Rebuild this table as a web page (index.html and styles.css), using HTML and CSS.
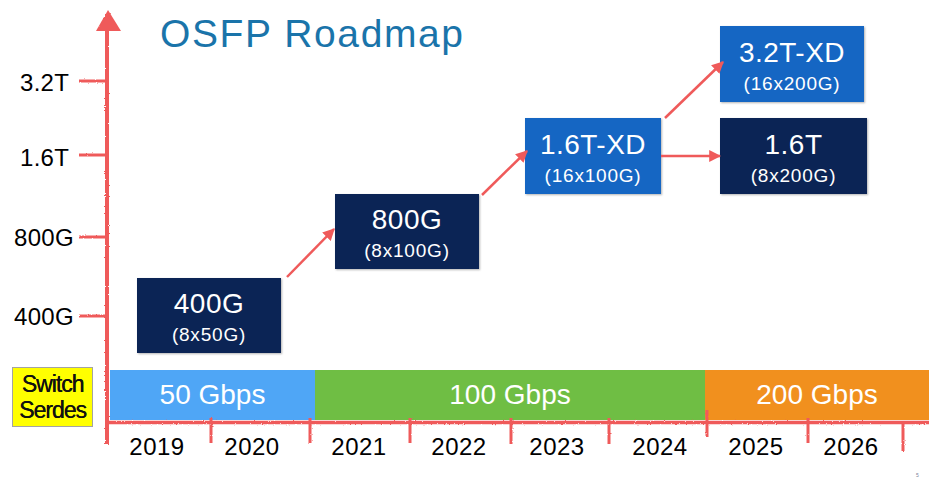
FILE: index.html
```html
<!DOCTYPE html>
<html lang="en">
<head>
<meta charset="utf-8">
<title>OSFP Roadmap</title>
<link rel="stylesheet" href="styles.css">
</head>
<body>
<div class="slide">
  <h1 class="title">OSFP Roadmap</h1>

  <div class="timeline">
    <div class="bars">
      <div class="serdes">Switch<br>Serdes</div>
      <div class="seg seg-50">50 Gbps</div>
      <div class="seg seg-100">100 Gbps</div>
      <div class="seg seg-200">200 Gbps</div>
    </div>
    <div class="years">
      <span>2019</span><span>2020</span><span>2021</span><span>2022</span>
      <span>2023</span><span>2024</span><span>2025</span><span>2026</span>
    </div>
  </div>

  <div class="canvas">
    <span class="ylabel y32">3.2T</span>
    <span class="ylabel y16">1.6T</span>
    <span class="ylabel y800">800G</span>
    <span class="ylabel y400">400G</span>

    <div class="node navy n400"><span class="main">400G</span><span class="sub">(8x50G)</span></div>
    <div class="node navy n800"><span class="main">800G</span><span class="sub">(8x100G)</span></div>
    <div class="node blue n16xd"><span class="main">1.6T-XD</span><span class="sub">(16x100G)</span></div>
    <div class="node blue n32xd"><span class="main">3.2T-XD</span><span class="sub">(16x200G)</span></div>
    <div class="node navy n16"><span class="main">1.6T</span><span class="sub">(8x200G)</span></div>

    <svg class="axes" width="936" height="481" viewBox="0 0 936 481" aria-hidden="true">
      <defs>
        <filter id="rough" filterUnits="userSpaceOnUse" x="0" y="0" width="936" height="481">
          <feTurbulence type="fractalNoise" baseFrequency="0.9" numOctaves="2" seed="4" result="noise"/>
          <feDisplacementMap in="SourceGraphic" in2="noise" scale="2.2" xChannelSelector="R" yChannelSelector="G"/>
        </filter>
        <marker id="head" viewBox="0 0 10 10" refX="9" refY="5" markerUnits="userSpaceOnUse" markerWidth="12" markerHeight="12" orient="auto">
          <path d="M0,0 L10,5 L0,10 z" fill="#ef5a5a"/>
        </marker>
      </defs>
      <g class="rough" filter="url(#rough)" stroke="#ef5a5a" fill="none">
        <line x1="107" y1="26" x2="107" y2="444" stroke-width="4"/>
        <polygon points="108,10 96,31 121,31" fill="#ef5a5a" stroke="none"/>
        <line x1="79" y1="81" x2="107" y2="81" stroke-width="3"/>
        <line x1="79" y1="155" x2="107" y2="155" stroke-width="3"/>
        <line x1="79" y1="237" x2="107" y2="237" stroke-width="3"/>
        <line x1="79" y1="316" x2="107" y2="316" stroke-width="3"/>
        <line x1="107" y1="422.5" x2="929" y2="422.5" stroke-width="3.5"/>
        <line x1="211" y1="418" x2="211" y2="443" stroke-width="3"/>
        <line x1="310" y1="418" x2="310" y2="443" stroke-width="3"/>
        <line x1="410" y1="418" x2="410" y2="443" stroke-width="3"/>
        <line x1="511" y1="418" x2="511" y2="444" stroke-width="3"/>
        <line x1="609" y1="418" x2="609" y2="444" stroke-width="3"/>
        <line x1="707" y1="410" x2="707" y2="437" stroke-width="3"/>
        <line x1="808" y1="418" x2="808" y2="443" stroke-width="3"/>
        <line x1="903" y1="423" x2="903" y2="451" stroke-width="3"/>
      </g>
      <g stroke="#ef5a5a" stroke-width="2.5" fill="none">
        <line x1="287" y1="277" x2="334" y2="229" marker-end="url(#head)"/>
        <line x1="482" y1="195" x2="527" y2="151" marker-end="url(#head)"/>
        <line x1="665" y1="118" x2="723" y2="62" marker-end="url(#head)"/>
        <line x1="661" y1="156" x2="720" y2="156" marker-end="url(#head)"/>
      </g>
    </svg>
  </div>

  <span class="pageno">5</span>
</div>
</body>
</html>
```

FILE: styles.css
```css
* { box-sizing: border-box; }

html, body {
  margin: 0;
  padding: 0;
  background: #ffffff;
}

body {
  font-family: "Liberation Sans", Arial, sans-serif;
}

.slide {
  position: relative;
  width: 936px;
  height: 481px;
  overflow: hidden;
  background: #ffffff;
}

.title {
  margin: 0;
  padding: 14px 0 0 160px;
  font-size: 39px;
  line-height: 39px;
  font-weight: normal;
  letter-spacing: 1.6px;
  color: #1a74aa;
}

.timeline {
  margin-top: 314px;
}

.bars {
  display: flex;
  align-items: flex-start;
  padding-left: 12px;
}

.serdes {
  width: 81px;
  height: 60px;
  margin-right: 17px;
  background: #ffff00;
  border: 1px solid #a3a3a3;
  display: flex;
  align-items: center;
  justify-content: center;
  text-align: center;
  font-size: 23px;
  line-height: 26px;
  letter-spacing: -1px;
  color: #111111;
  text-shadow: 0.4px 0 0 #111111;
}

.seg {
  margin-top: 3px;
  height: 50px;
  display: flex;
  align-items: center;
  justify-content: center;
  color: #ffffff;
  font-size: 28px;
  line-height: 28px;
}

.seg-50 { width: 205px; background: #4fa6f6; }
.seg-100 { width: 390px; background: #6fbe44; }
.seg-200 { width: 224px; background: #f1901e; }

.years {
  margin-top: 8px;
  padding-left: 110px;
  display: grid;
  grid-template-columns: 94px 96px 118px 82px 114px 92px 100px 90px;
  font-size: 24px;
  line-height: 24px;
  letter-spacing: 0.5px;
  color: #000000;
}

.years span {
  text-align: center;
}

.canvas {
  position: absolute;
  inset: 0;
  pointer-events: none;
}

.axes {
  position: absolute;
  left: 0;
  top: 0;
}

.ylabel {
  position: absolute;
  font-size: 24px;
  line-height: 24px;
  letter-spacing: 0.3px;
  color: #000000;
}

.y32 { left: 20px; top: 71px; }
.y16 { left: 20px; top: 146px; }
.y800 { left: 14px; top: 226px; }
.y400 { left: 14px; top: 305px; }

.node {
  position: absolute;
  display: flex;
  flex-direction: column;
  align-items: center;
  justify-content: center;
  gap: 7px;
  padding-top: 3px;
  color: #ffffff;
  box-shadow: 1px 1px 2px rgba(0, 0, 0, 0.3);
}

.node .main {
  font-size: 28px;
  line-height: 28px;
  letter-spacing: 0.5px;
}

.node .sub {
  font-size: 19px;
  line-height: 19px;
  letter-spacing: 0.8px;
}

.navy { background: #0b2455; }
.blue { background: #1566c3; }

.n400 { left: 137px; top: 278px; width: 144px; height: 75px; }
.n800 { left: 335px; top: 194px; width: 144px; height: 75px; }
.n16xd { left: 525px; top: 118px; width: 136px; height: 76px; }
.n32xd { left: 720px; top: 26px; width: 144px; height: 76px; }
.n16 { left: 720px; top: 118px; width: 147px; height: 76px; }

.pageno {
  position: absolute;
  left: 916px;
  top: 472px;
  font-size: 5px;
  line-height: 6px;
  color: #7a7f99;
}
```
